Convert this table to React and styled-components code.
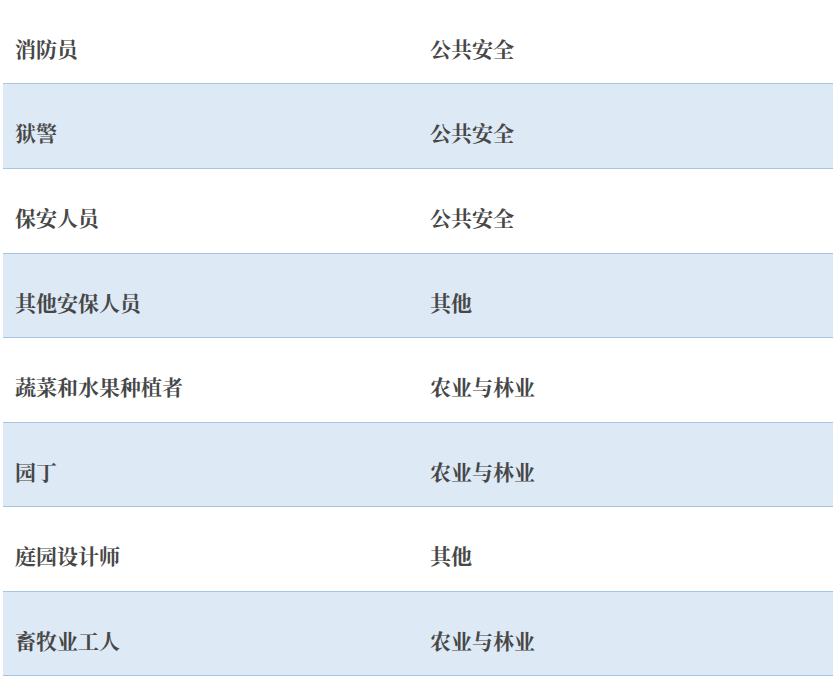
import React from "react";
import styled, { createGlobalStyle } from "styled-components";

const Global = createGlobalStyle`
  html, body { margin: 0; padding: 0; background: #ffffff; }
  body { font-family: "Noto Serif CJK SC", "Liberation Serif", serif; }
`;

const Page = styled.div`
  padding-left: 3px;
  width: 830px;
`;

const Table = styled.div`
  display: flex;
  flex-direction: column;
  width: 830px;
  margin-top: -0.17px;
`;

const Row = styled.div`
  display: grid;
  grid-template-columns: 415px 415px;
  background: ${(p) => (p.$striped ? "#dde9f5" : "#ffffff")};
  border-bottom: 1px solid #a3c6e6;
`;

const Cell = styled.div`
  padding: 34px 12px 21.57px;
  font-size: 21px;
  line-height: 28px;
  font-weight: 700;
  color: #474747;
  white-space: nowrap;
`;

const rows = [
  ["消防员", "公共安全"],
  ["狱警", "公共安全"],
  ["保安人员", "公共安全"],
  ["其他安保人员", "其他"],
  ["蔬菜和水果种植者", "农业与林业"],
  ["园丁", "农业与林业"],
  ["庭园设计师", "其他"],
  ["畜牧业工人", "农业与林业"],
];

export default function App() {
  return (
    <>
      <Global />
      <Page>
        <Table>
          {rows.map(([job, cat], i) => (
            <Row key={job} $striped={i % 2 === 1}>
              <Cell>{job}</Cell>
              <Cell>{cat}</Cell>
            </Row>
          ))}
        </Table>
      </Page>
    </>
  );
}
